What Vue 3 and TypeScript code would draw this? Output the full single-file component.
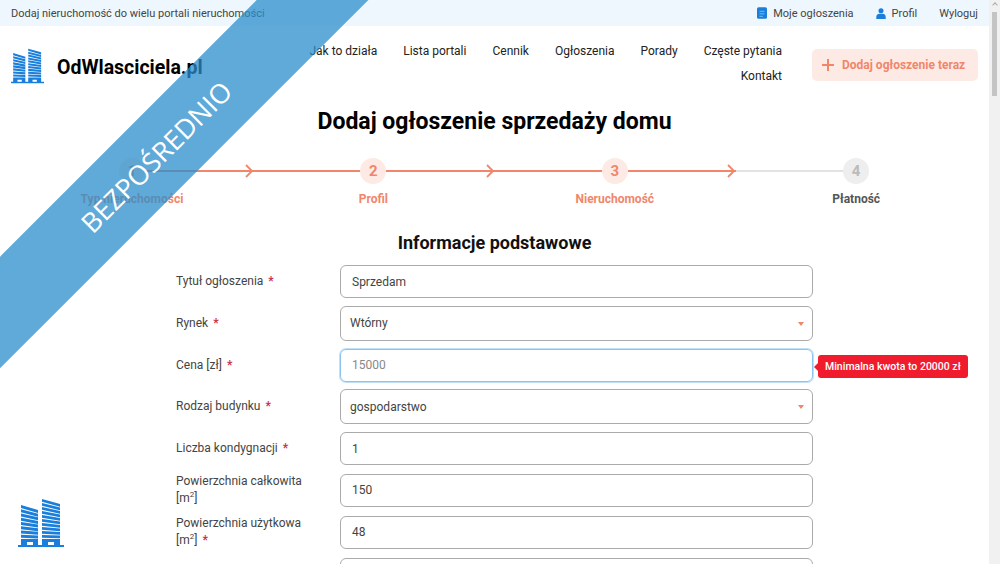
<template>
  <div class="page">
    <div class="topbar">
      <span class="tagline">Dodaj nieruchomość do wielu portali nieruchomości</span>
      <div class="toplinks">
        <a class="toplink">
          <svg viewBox="0 0 12 14" width="10" height="12"><path d="M2 0h8a2 2 0 0 1 2 2v10a2 2 0 0 1-2 2H2a2 2 0 0 1-2-2V2a2 2 0 0 1 2-2z" fill="#1a7fdc" /><path d="M3 5h6M3 8h6M3 11h4" stroke="#8cc4f2" stroke-width="1" /></svg>
          Moje ogłoszenia
        </a>
        <a class="toplink">
          <svg viewBox="0 0 12 14" width="10" height="11"><circle cx="6" cy="3.4" r="3.2" fill="#1a7fdc" /><path d="M0 14v-2.6C0 9 2 7.4 4 7.4h4c2 0 4 1.600 4 4V14z" fill="#1a7fdc" /></svg>
          Profil
        </a>
        <a class="toplink">Wyloguj</a>
      </div>
    </div>

    <header class="header">
      <div class="brand">
        <svg class="brand-icon" viewBox="0 0 46 50">
          <path :d="towers" fill="#1a7fdc" />
          <path d="M9 44h6v3H9zM30 44h6v3h-6z" fill="#fff" />
        </svg>
        <span class="brand-name">OdWlasciciela.pl</span>
      </div>
      <nav class="nav">
        <a v-for="item in navItems" :key="item">{{ item }}</a>
      </nav>
      <button class="add-btn"><span class="plus"></span>Dodaj ogłoszenie teraz</button>
    </header>

    <h1 class="title">Dodaj ogłoszenie sprzedaży domu</h1>

    <div class="steps">
      <div v-for="(step, i) in steps" :key="step.label" class="step" :class="{ off: step.off }">
        <div class="track">
          <span class="bubble">{{ i + 1 }}</span>
          <span v-if="i < steps.length - 1" class="line" :class="{ half: i === 2 }">
            <svg viewBox="0 0 10 14" width="10" height="14"><path d="M2 1l6 6-6 6" fill="none" stroke="#f0866a" stroke-width="1.800" /></svg>
          </span>
        </div>
        <span class="step-label">{{ step.label }}</span>
      </div>
    </div>

    <h2 class="section">Informacje podstawowe</h2>

    <form class="form" @submit.prevent>
      <div v-for="f in fields" :key="f.label" class="row">
        <label>{{ f.label }}<template v-if="f.unit"><br />[m<sup>2</sup>]</template><b v-if="f.required">*</b></label>
        <div class="control" :class="{ select: f.select, focus: f.error }">
          <span class="value" :class="{ muted: f.error }">{{ f.value }}</span>
          <span v-if="f.select" class="caret"></span>
          <span v-if="f.error" class="tip">{{ f.error }}</span>
        </div>
      </div>
    </form>

    <!-- nakładki -->
    <div class="ribbon"><span>BEZPOŚREDNIO</span></div>
    <svg class="corner-logo" viewBox="0 0 46 50">
      <path :d="towers" fill="#1a7fdc" />
      <path d="M9 44h6v3H9zM30 44h6v3h-6z" fill="#fff" />
    </svg>
  </div>
</template>

<script setup lang="ts">
interface Field {
  label: string
  value: string
  required?: boolean
  select?: boolean
  unit?: boolean
  error?: string
}

const navItems = ['Jak to działa', 'Lista portali', 'Cennik', 'Ogłoszenia', 'Porady', 'Częste pytania', 'Kontakt']

const steps = [
  { label: 'Typ nieruchomości', off: false },
  { label: 'Profil', off: false },
  { label: 'Nieruchomość', off: false },
  { label: 'Płatność', off: true }
]

const fields: Field[] = [
  { label: 'Tytuł ogłoszenia', value: 'Sprzedam', required: true },
  { label: 'Rynek', value: 'Wtórny', required: true, select: true },
  { label: 'Cena [zł]', value: '15000', required: true, error: 'Minimalna kwota to 20000 zł' },
  { label: 'Rodzaj budynku', value: 'gospodarstwo', required: true, select: true },
  { label: 'Liczba kondygnacji', value: '1', required: true },
  { label: 'Powierzchnia całkowita', value: '150', unit: true },
  { label: 'Powierzchnia użytkowa', value: '48', unit: true, required: true },
  { label: '', value: '' }
]

// pasy wieżowca: u góry mocno pochylone, przy ziemi prawie płaskie
function tower(x: number, w: number, top: number, rows: number): string {
  const bottom = 41
  const step = (bottom - top) / rows
  let d = ''
  for (let i = 0; i < rows; i++) {
    const y = top + i * step
    const slope = 5 * (1 - i / rows)
    d += `M${x} ${y}L${x + w} ${y + slope}V${y + slope + step - 1.2}L${x} ${y + step - 1.2}Z`
  }
  return d + `M${x} 41h${w}v6h-${w}Z`
}

const towers = tower(3, 17, 7, 8) + tower(24, 18, 1, 10) + 'M0 47h46v2H0Z'
</script>

<style>
html, body {
  height: 100%;
  overflow: hidden;
}
</style>

<style scoped>
.page {
  position: relative;
  height: 564px;
  overflow: hidden;
  padding-right: 11px;
  box-sizing: border-box;
  background: #fff;
  font-family: Roboto, "Noto Sans", sans-serif;
  color: #333;
}

/* pasek przewijania */
.page::before {
  content: "";
  position: absolute;
  top: 0;
  right: 0;
  width: 11px;
  height: 564px;
  background: linear-gradient(#c4c4c4, #c4c4c4) 3px 12px / 5px 84px no-repeat #f1f1f1;
}

.page::after {
  content: "";
  position: absolute;
  top: 3px;
  right: 3px;
  width: 3px;
  height: 3px;
  border: solid #aaa;
  border-width: 1px 0 0 1px;
  transform: rotate(45deg);
}

.topbar {
  height: 26px;
  padding: 0 11px;
  display: flex;
  align-items: center;
  justify-content: space-between;
  background: #eef7fd;
  font-size: 11px;
  color: #444;
}

.toplinks {
  display: flex;
  gap: 22px;
}

.toplink {
  display: flex;
  align-items: center;
  gap: 6px;
}

.header {
  height: 80px;
  padding: 0 11px;
  display: flex;
  align-items: flex-start;
}

.brand {
  width: 290px;
  flex: none;
  display: flex;
  align-items: center;
  gap: 13px;
  margin-top: 22px;
}

.brand-icon {
  width: 33px;
  height: 36px;
}

.brand-name {
  font-size: 19.500px;
  font-weight: 700;
  color: #000;
  padding-top: 3px;
}

.nav {
  width: 481px;
  flex: none;
  display: flex;
  flex-wrap: wrap;
  justify-content: flex-end;
  gap: 0 26px;
  font-size: 12px;
  line-height: 25px;
  color: #222;
  padding-top: 13px;
}

.add-btn {
  margin: 23px 0 0 30px;
  width: 166px;
  height: 32px;
  border: 0;
  border-radius: 5px;
  background: #fdeae4;
  color: #f0866a;
  font: 700 12px Roboto, sans-serif;
  display: flex;
  align-items: center;
  gap: 8px;
  padding: 0 10px;
  white-space: nowrap;
}

.plus {
  width: 12px;
  height: 12px;
  flex: none;
  background:
    linear-gradient(#f0866a, #f0866a) center / 12px 2px no-repeat,
    linear-gradient(#f0866a, #f0866a) center / 2px 12px no-repeat;
}

.title {
  margin: 1px 0 0;
  text-align: center;
  font-size: 23px;
  font-weight: 700;
  line-height: 30px;
  color: #000;
}

.steps {
  margin: 21px 0 0 0;
  padding-left: 119px;
  display: flex;
}

.step {
  width: 241.400px;
  position: relative;
  color: #f0866a;
}

.step:last-child {
  width: 30px;
}

.track {
  display: flex;
  align-items: center;
  height: 26px;
}

.bubble {
  width: 26px;
  height: 26px;
  flex: none;
  border-radius: 50%;
  background: #fdeae4;
  text-align: center;
  font-size: 15px;
  font-weight: 700;
  line-height: 26px;
}

.off .bubble {
  background: #eee;
  color: #bbb;
}

.line {
  flex: 1;
  height: 2px;
  background: #f0866a;
  position: relative;
}

.line.half {
  background: linear-gradient(90deg, #f0866a 50%, #e2e2e2 50%);
}

.line svg {
  position: absolute;
  left: 50%;
  top: -6px;
  margin-left: -9px;
}

.step-label {
  position: absolute;
  top: 34px;
  left: 13px;
  transform: translateX(-50%);
  white-space: nowrap;
  font-size: 12px;
  font-weight: 700;
}

.off .step-label {
  color: #555;
}

.section {
  margin: 48px 0 0;
  text-align: center;
  font-size: 18px;
  font-weight: 700;
  line-height: 22px;
  color: #111;
}

.form {
  margin: 11px 0 0 176px;
  width: 637px;
  display: flex;
  flex-direction: column;
  gap: 8.800px;
}

.row {
  display: flex;
  align-items: center;
  height: 33px;
  flex: none;
}

.row label {
  width: 164px;
  flex: none;
  font-size: 12px;
  line-height: 17px;
  color: #444;
}

.row label b {
  color: #c8324a;
  margin-left: 5px;
}

sup {
  font-size: 8px;
  line-height: 0;
}

.control {
  flex: 1;
  height: 33px;
  box-sizing: border-box;
  position: relative;
  border: 1px solid #aaa;
  border-radius: 6px;
  display: flex;
  align-items: center;
  padding: 0 11px;
  font-size: 12px;
  color: #444;
}

.select {
  padding-left: 9px;
  height: 35px;
  flex: 1;
}

.focus {
  border-color: #8cc4ee;
  box-shadow: 0 0 0 1px #bfe0f7;
}

.muted {
  color: #888;
}

.caret {
  position: absolute;
  right: 8px;
  top: 15px;
  border: 3.500px solid transparent;
  border-top: 4px solid #f0866a;
  border-bottom: 0;
}

.tip {
  position: absolute;
  left: 100%;
  margin-left: 6px;
  top: 5px;
  width: 150px;
  box-sizing: border-box;
  height: 23px;
  padding: 0 7px;
  border-radius: 3px;
  background: #f01b2c;
  color: #fff;
  font-size: 10.500px;
  font-weight: 500;
  line-height: 23px;
  white-space: nowrap;
}

.tip::before {
  content: "";
  position: absolute;
  right: 100%;
  top: 8px;
  border: 4px solid transparent;
  border-right-color: #f01b2c;
  border-left: 0;
}

.ribbon {
  position: absolute;
  left: -144px;
  top: 117px;
  width: 600px;
  height: 79px;
  transform: rotate(-45deg);
  background: rgba(41, 141, 204, 0.75);
  color: #fff;
  display: flex;
  align-items: center;
  justify-content: center;
  font-family: "Open Sans", sans-serif;
  font-size: 27px;
  font-weight: 400;
}

.corner-logo {
  position: absolute;
  left: 18px;
  top: 498px;
  width: 46px;
  height: 50px;
}
</style>
